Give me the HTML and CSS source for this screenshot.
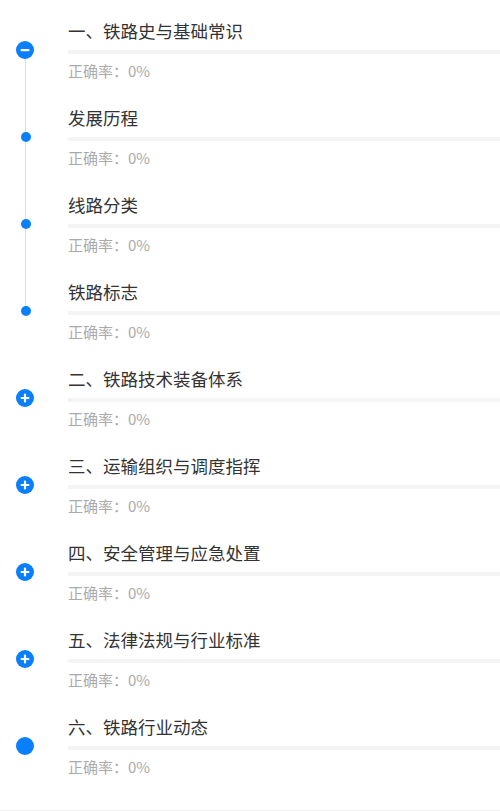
FILE: index.html
```html
<!DOCTYPE html>
<html lang="zh-CN">
<head>
	<meta charset="UTF-8">
	<meta name="viewport" content="width=device-width, initial-scale=1.0">
	<title>章节练习</title>
	<link rel="stylesheet" href="styles.css">
</head>
<body>
	<div class="page">
		<ul class="chapter-list">
			<li class="chapter-item line-down">
				<div class="axis">
					<svg class="icon-big" viewBox="0 0 18 18"><circle cx="9" cy="9" r="9" fill="#0a7ffb"/><rect x="4.5" y="8" width="9" height="2.2" rx="1" fill="#fff"/></svg>
				</div>
				<div class="content">
					<div class="title">一、铁路史与基础常识</div>
					<div class="divider"></div>
					<div class="rate">正确率：0%</div>
				</div>
			</li>
			<li class="chapter-item line-up line-down">
				<div class="axis"><span class="dot"></span></div>
				<div class="content">
					<div class="title">发展历程</div>
					<div class="divider"></div>
					<div class="rate">正确率：0%</div>
				</div>
			</li>
			<li class="chapter-item line-up line-down">
				<div class="axis"><span class="dot"></span></div>
				<div class="content">
					<div class="title">线路分类</div>
					<div class="divider"></div>
					<div class="rate">正确率：0%</div>
				</div>
			</li>
			<li class="chapter-item line-up">
				<div class="axis"><span class="dot"></span></div>
				<div class="content">
					<div class="title">铁路标志</div>
					<div class="divider"></div>
					<div class="rate">正确率：0%</div>
				</div>
			</li>
			<li class="chapter-item">
				<div class="axis">
					<svg class="icon-big" viewBox="0 0 18 18"><circle cx="9" cy="9" r="9" fill="#0a7ffb"/><rect x="4.5" y="7.9" width="9" height="2.2" rx="1" fill="#fff"/><rect x="7.9" y="4.5" width="2.2" height="9" rx="1" fill="#fff"/></svg>
				</div>
				<div class="content">
					<div class="title">二、铁路技术装备体系</div>
					<div class="divider"></div>
					<div class="rate">正确率：0%</div>
				</div>
			</li>
			<li class="chapter-item">
				<div class="axis">
					<svg class="icon-big" viewBox="0 0 18 18"><circle cx="9" cy="9" r="9" fill="#0a7ffb"/><rect x="4.5" y="7.9" width="9" height="2.2" rx="1" fill="#fff"/><rect x="7.9" y="4.5" width="2.2" height="9" rx="1" fill="#fff"/></svg>
				</div>
				<div class="content">
					<div class="title">三、运输组织与调度指挥</div>
					<div class="divider"></div>
					<div class="rate">正确率：0%</div>
				</div>
			</li>
			<li class="chapter-item">
				<div class="axis">
					<svg class="icon-big" viewBox="0 0 18 18"><circle cx="9" cy="9" r="9" fill="#0a7ffb"/><rect x="4.5" y="7.9" width="9" height="2.2" rx="1" fill="#fff"/><rect x="7.9" y="4.5" width="2.2" height="9" rx="1" fill="#fff"/></svg>
				</div>
				<div class="content">
					<div class="title">四、安全管理与应急处置</div>
					<div class="divider"></div>
					<div class="rate">正确率：0%</div>
				</div>
			</li>
			<li class="chapter-item">
				<div class="axis">
					<svg class="icon-big" viewBox="0 0 18 18"><circle cx="9" cy="9" r="9" fill="#0a7ffb"/><rect x="4.5" y="7.9" width="9" height="2.2" rx="1" fill="#fff"/><rect x="7.9" y="4.5" width="2.2" height="9" rx="1" fill="#fff"/></svg>
				</div>
				<div class="content">
					<div class="title">五、法律法规与行业标准</div>
					<div class="divider"></div>
					<div class="rate">正确率：0%</div>
				</div>
			</li>
			<li class="chapter-item">
				<div class="axis">
					<svg class="icon-big" viewBox="0 0 18 18"><circle cx="9" cy="9" r="9" fill="#0a7ffb"/></svg>
				</div>
				<div class="content">
					<div class="title">六、铁路行业动态</div>
					<div class="divider"></div>
					<div class="rate">正确率：0%</div>
				</div>
			</li>
		</ul>
	</div>
</body>
</html>
```

FILE: styles.css
```css
body {
	margin: 0;
	font-family: "Noto Sans CJK SC", "Noto Sans", sans-serif;
	background-color: #fff;
}
.page {
	min-height: 811px;
	box-sizing: border-box;
	border-bottom: 1px solid #f0f0f0;
}
.chapter-list {
	list-style: none;
	margin: 0;
	padding: 10px 0 0 0;
}
.chapter-item {
	display: flex;
	position: relative;
	height: 87px;
	box-sizing: border-box;
	padding: 9px 0 0 0;
}
/* timeline connector between the first chapter and its sections */
.chapter-item.line-down::after {
	content: "";
	position: absolute;
	left: 25px;
	top: 40px;
	bottom: 0;
	width: 1px;
	background-color: #c9e1fd;
}
.chapter-item.line-up::before {
	content: "";
	position: absolute;
	left: 25px;
	top: 0;
	height: 40px;
	width: 1px;
	background-color: #c9e1fd;
}
.axis {
	width: 68px;
	flex-shrink: 0;
	position: relative;
	z-index: 1;
}
.icon-big {
	display: block;
	width: 18px;
	height: 18px;
	margin: 22px 0 0 16px;
}
.dot {
	display: block;
	width: 10px;
	height: 10px;
	border-radius: 50%;
	background-color: #0a7ffb;
	margin: 26px 0 0 21px;
}
.content {
	flex: 1;
}
.title {
	font-size: 17.5px;
	line-height: 24px;
	color: #333;
}
.divider {
	height: 4px;
	margin-top: 7px;
	background-color: #f4f4f4;
}
.rate {
	margin-top: 7px;
	font-size: 15px;
	line-height: 20px;
	color: #aaa;
}
```
